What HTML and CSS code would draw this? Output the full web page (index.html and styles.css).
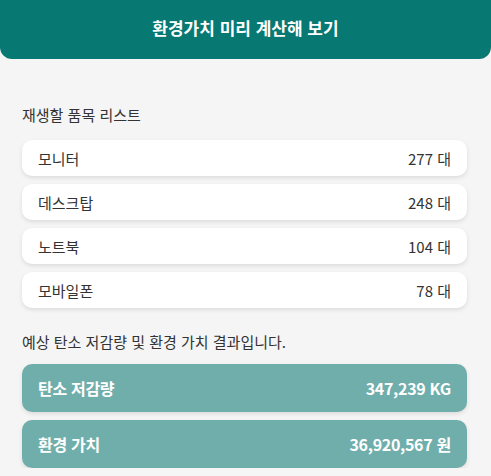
FILE: index.html
```html
<!DOCTYPE html>
<html lang="ko">
<head>
<meta charset="utf-8">
<link rel="stylesheet" href="styles.css">
</head>
<body>
<header class="top">
  <h1 class="title">환경가치 미리 계산해 보기</h1>
</header>
<main class="content">
  <p class="label label-list">재생할 품목 리스트</p>
  <ul class="items">
    <li class="item"><span>모니터</span><span>277 대</span></li>
    <li class="item"><span>데스크탑</span><span>248 대</span></li>
    <li class="item"><span>노트북</span><span>104 대</span></li>
    <li class="item"><span>모바일폰</span><span>78 대</span></li>
  </ul>
  <p class="label label-result">예상 탄소 저감량 및 환경 가치 결과입니다.</p>
  <div class="results">
    <div class="result"><span>탄소 저감량</span><span>347,239 KG</span></div>
    <div class="result"><span>환경 가치</span><span>36,920,567 원</span></div>
  </div>
</main>
</body>
</html>
```
FILE: styles.css
```css
html, body {
  margin: 0;
  padding: 0;
}
body {
  background: #f5f5f5;
  font-family: "Noto Sans CJK KR", "Noto Sans", sans-serif;
  color: #333;
}
.top {
  height: 59px;
  box-sizing: border-box;
  padding-bottom: 3px;
  background: #077872;
  border-radius: 0 0 12px 12px;
  display: flex;
  align-items: center;
  justify-content: center;
}
.title {
  margin: 0;
  color: #fff;
  font-size: 17px;
  font-weight: 700;
  line-height: 20px;
}
.content {
  padding: 0 24px 0 22px;
}
.label {
  margin: 0;
  font-size: 15px;
  line-height: 20px;
  color: #333;
}
.label-list {
  margin-top: 46px;
  margin-bottom: 15px;
}
.label-result {
  margin-top: 24px;
  margin-bottom: 12px;
}
.items {
  list-style: none;
  margin: 0;
  padding: 0;
  display: flex;
  flex-direction: column;
  gap: 8px;
}
.item {
  height: 36px;
  background: #fff;
  border-radius: 10px;
  box-shadow: 0 2px 4px rgba(0, 0, 0, 0.1);
  display: flex;
  align-items: center;
  justify-content: space-between;
  padding: 0 16px;
  font-size: 15px;
  color: #333;
}
.results {
  display: flex;
  flex-direction: column;
  gap: 8px;
}
.result {
  height: 48px;
  background: #70aeab;
  border-radius: 10px;
  box-shadow: 0 2px 4px rgba(0, 0, 0, 0.1);
  display: flex;
  align-items: center;
  justify-content: space-between;
  padding: 0 16px;
  font-size: 16px;
  font-weight: 700;
  letter-spacing: -0.3px;
  color: #fff;
}
```
